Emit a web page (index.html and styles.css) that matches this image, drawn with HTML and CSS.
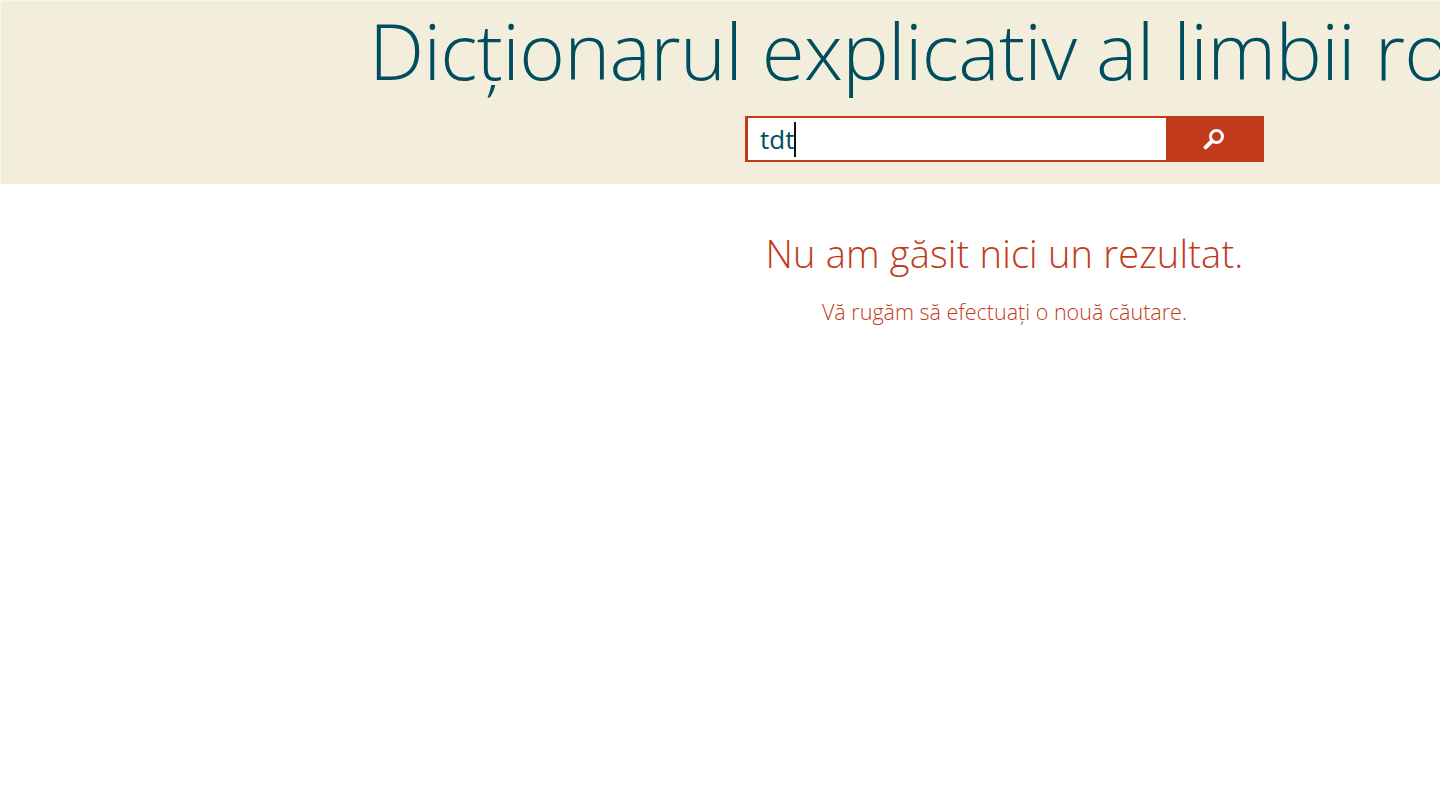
FILE: index.html
```html
<!DOCTYPE html>
<html lang="ro">
<head>
    <meta charset="UTF-8">
    <meta name="viewport" content="width=device-width, initial-scale=1.0">
    <title>Dicționarul explicativ al limbii române</title>
    <link rel="stylesheet" href="styles.css">
</head>
<body>
    <!-- Header with title and search -->
    <header class="top-band">
        <h1 class="app-title">Dicționarul explicativ al limbii române</h1>
        <div class="search-bar">
            <div class="search-field"><span class="search-text">tdt</span><span class="search-caret"></span></div>
            <button class="search-button" aria-label="Caută">
                <svg class="search-icon" viewBox="0 0 24 24" width="24" height="24">
                    <circle cx="14.5" cy="9.5" r="6" fill="none" stroke="#fff" stroke-width="3"/>
                    <path d="M10 14 L3.6 20.4" fill="none" stroke="#fff" stroke-width="4" stroke-linecap="round"/>
                </svg>
            </button>
        </div>
    </header>

    <!-- Empty result message -->
    <main class="results">
        <h2 class="results-title">Nu am găsit nici un rezultat.</h2>
        <p class="results-hint">Vă rugăm să efectuați o nouă căutare.</p>
    </main>
</body>
</html>
```

FILE: styles.css
```css
html, body {
    height: 100%;
}
body {
    margin: 0;
    overflow: hidden;
    background-color: #fff;
    font-family: "Open Sans", "Noto Sans", sans-serif;
}
.top-band {
    box-sizing: border-box;
    height: 184px;
    padding-left: 368px;
    overflow: hidden;
    background-color: #f2eedb;
    border-top: 1px solid #f8f6ea;
    border-left: 1px solid #f8f6ea;
}
.app-title {
    margin: 0;
    height: 115px;
    font-size: 78px;
    line-height: 98px;
    letter-spacing: -0.67px;
    font-weight: 300;
    color: #004d60;
    white-space: nowrap;
}
.search-bar {
    display: flex;
    width: 519px;
    height: 46px;
    margin-left: 376px;
}
.search-field {
    box-sizing: border-box;
    display: flex;
    align-items: center;
    flex: 1;
    padding-left: 12px;
    background-color: #fff;
    border-style: solid;
    border-color: #c13b1b;
    border-width: 2px 0 2px 3px;
    font-size: 26px;
    color: #004d60;
}
.search-caret {
    width: 2px;
    height: 35px;
    background-color: #111;
}
.search-button {
    display: flex;
    align-items: center;
    justify-content: center;
    width: 98px;
    padding: 0 2px 0 0;
    border: 0;
    background-color: #c13b1b;
}
.results {
    width: 519px;
    margin-left: 745px;
    text-align: center;
    color: #c13b1b;
}
.results-title {
    margin: 42px 0 0;
    font-size: 38px;
    line-height: 54px;
    letter-spacing: 0.17px;
    font-weight: 300;
}
.results-hint {
    margin: 17px 0 0;
    font-size: 21.5px;
    line-height: 30px;
    font-weight: 300;
}
```
